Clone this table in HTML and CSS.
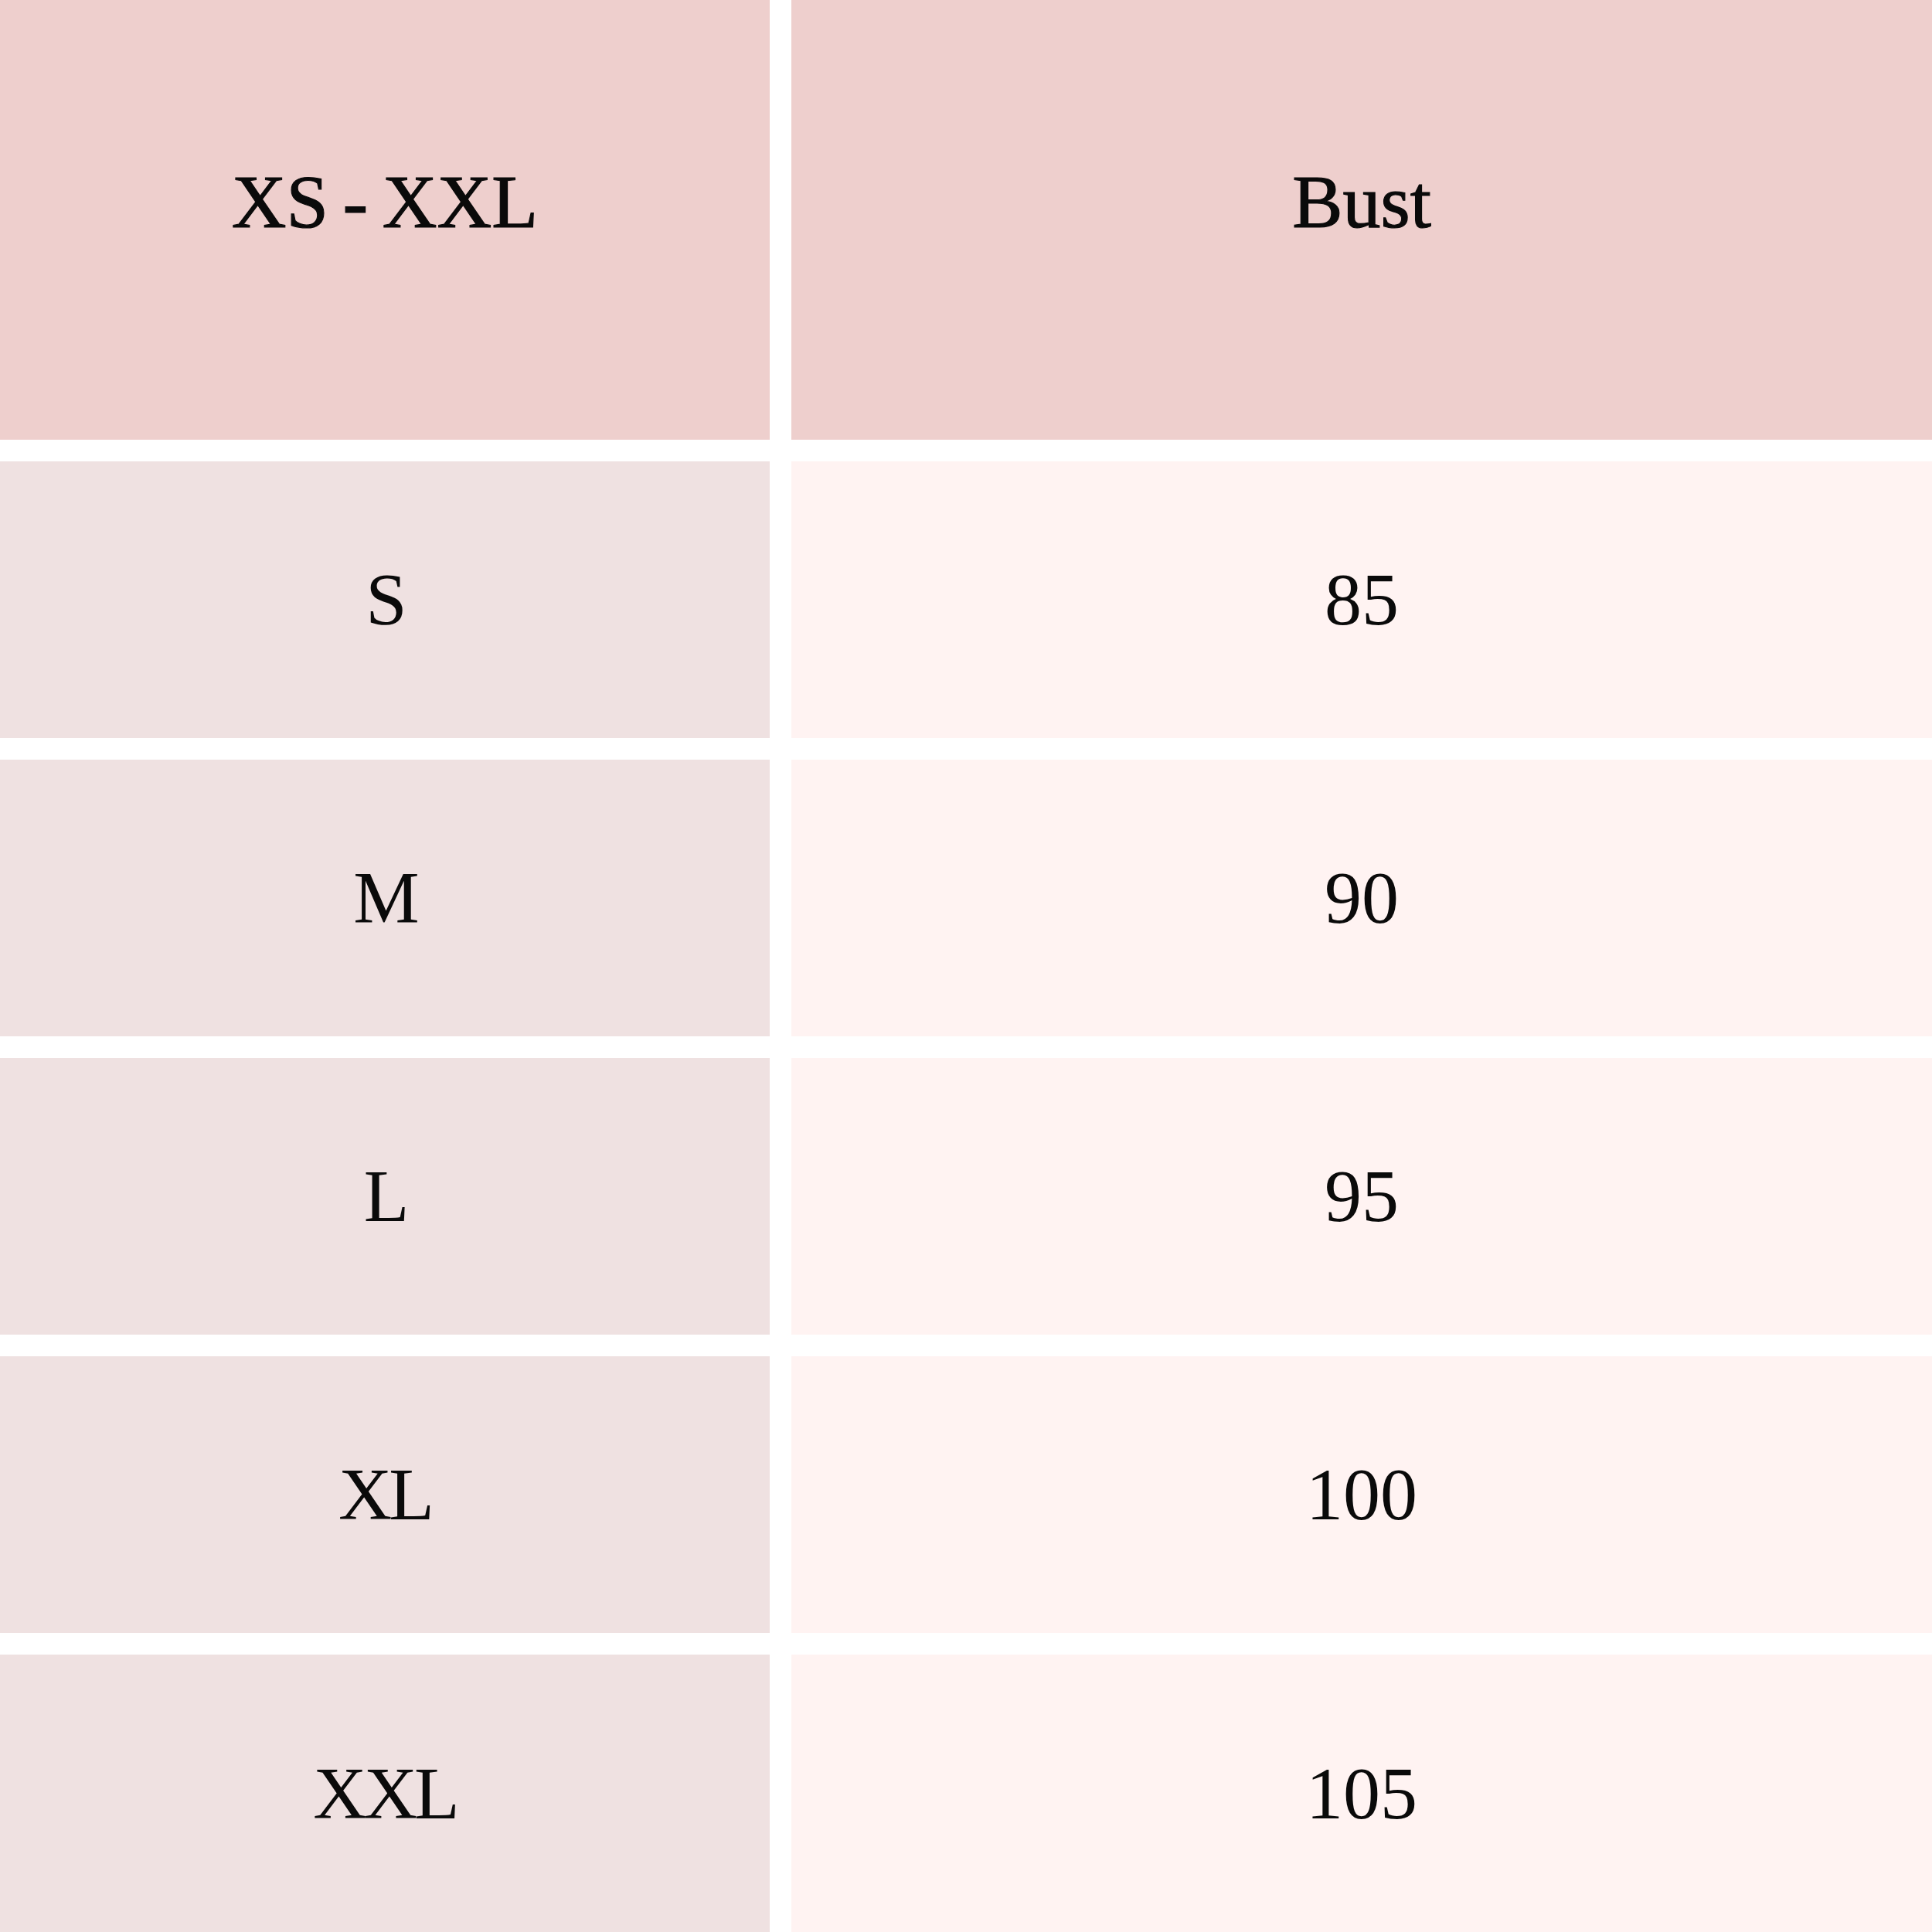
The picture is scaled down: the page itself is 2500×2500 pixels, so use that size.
FILE: index.html
```html
<!DOCTYPE html>
<html lang="en">
<head>
<meta charset="utf-8">
<title>Size chart</title>
<link rel="stylesheet" href="styles.css">
</head>
<body>
<div class="chart">
  <div class="cell head"><span class="head-range">XS - XXL</span></div>
  <div class="cell head">Bust</div>
  <div class="cell size">S</div>
  <div class="cell value">85</div>
  <div class="cell size">M</div>
  <div class="cell value">90</div>
  <div class="cell size">L</div>
  <div class="cell value">95</div>
  <div class="cell size">XL</div>
  <div class="cell value">100</div>
  <div class="cell size">XXL</div>
  <div class="cell value">105</div>
</div>
</body>
</html>
```

FILE: styles.css
```css
html, body {
  margin: 0;
  padding: 0;
  background: #ffffff;
}

.chart {
  width: 2500px;
  height: 2500px;
  display: grid;
  grid-template-columns: 996px 1476px;
  grid-template-rows: 569px 358px 358px 358px 358px 359px;
  column-gap: 28px;
  row-gap: 28px;
  font-family: "Liberation Serif", "Times New Roman", serif;
  color: #0a0a0a;
}

.cell {
  display: flex;
  align-items: center;
  justify-content: center;
  font-size: 96px;
  line-height: 1;
}

.head {
  background: #eecfcd;
  font-size: 98px;
  padding-bottom: 48px;
  -webkit-text-stroke: 1.2px #0a0a0a;
}

.head-range {
  word-spacing: -6px;
}

.size {
  background: #efe1e1;
  letter-spacing: -4px;
}

.value {
  background: #fff3f2;
}
```
